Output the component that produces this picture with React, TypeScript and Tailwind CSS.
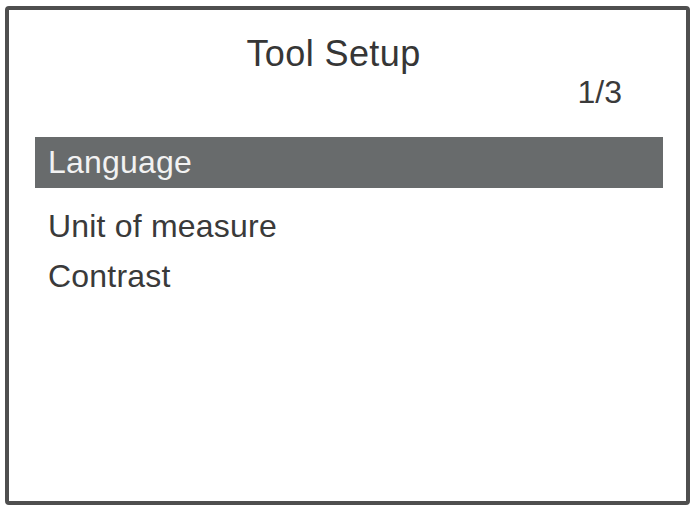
export default function App() {
  const items = ["Language", "Unit of measure", "Contrast"];
  const selected = 0;

  return (
    <div
      className="w-[695px] h-[506px] bg-white pt-[6px] pl-[5px]"
      style={{ fontFamily: '"Liberation Sans", Arial, sans-serif' }}
    >
      {/* Screen frame */}
      <div className="w-[685px] h-[499px] border-4 border-[#4f4f4f] rounded-[4px] flex flex-col">
        {/* Header */}
        <h1 className="pt-[26px] pr-[28px] text-center text-[36px] leading-[36px] text-[#363636] tracking-[0.4px]">
          Tool Setup
        </h1>
        <div className="mt-[4px] pr-[64px] text-right text-[32px] leading-[32px] text-[#3a3a3a]">
          1/3
        </div>

        {/* Menu */}
        <ul className="mt-[29px] ml-[26px] w-[628px] flex flex-col">
          {items.map((item, i) =>
            i === selected ? (
              <li
                key={item}
                className="h-[51px] pl-[13px] bg-[#686b6c] text-[#f2f2f2] text-[32px] leading-[51px] tracking-[0.2px]"
              >
                {item}
              </li>
            ) : (
              <li
                key={item}
                className={
                  "h-[50px] pl-[13px] text-[#3a3a3a] text-[32px] leading-[50px] tracking-[0.2px]" +
                  (i === 1 ? " mt-[13px]" : "")
                }
              >
                {item}
              </li>
            )
          )}
        </ul>
      </div>
    </div>
  );
}
